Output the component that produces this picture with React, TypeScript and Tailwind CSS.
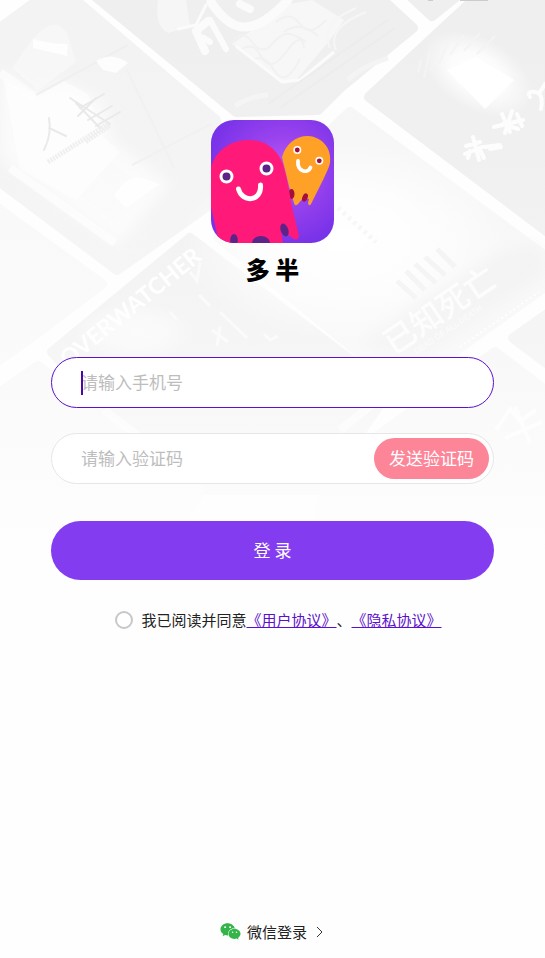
import { useState } from "react";
import { FaWeixin } from "react-icons/fa";

function Backdrop() {
  return (
    <svg
      aria-hidden="true"
      viewBox="0 0 545 580"
      preserveAspectRatio="xMidYMin slice"
      className="absolute inset-x-0 top-0 w-full"
    >
      <defs>
        <linearGradient id="fade" x1="0" y1="0" x2="0" y2="1">
          <stop offset="0" stopColor="#fefefe" stopOpacity="0" />
          <stop offset="0.3" stopColor="#fefefe" stopOpacity="0.1" />
          <stop offset="0.6" stopColor="#fefefe" stopOpacity="0.4" />
          <stop offset="0.95" stopColor="#fefefe" stopOpacity="1" />
        </linearGradient>
        <filter id="soft" x="-30%" y="-30%" width="160%" height="160%">
          <feGaussianBlur stdDeviation="7" />
        </filter>
        <radialGradient id="glow">
          <stop offset="0" stopColor="#fff" />
          <stop offset="0.5" stopColor="#fff" stopOpacity="0.8" />
          <stop offset="1" stopColor="#fff" stopOpacity="0" />
        </radialGradient>
      </defs>

      <g strokeWidth="10" strokeLinejoin="round">
        <path d="M-8 34 38 0V-8H66L216 120 208 206 117 270 -8 176Z" fill="#f3f3f3" stroke="#f3f3f3" />
        <path d="M90-8H374L413 28 340 88 318 110 236 112Z" fill="#efefef" stroke="#efefef" />
        <path d="M406-8H462L432 16Z" fill="#efefef" stroke="#efefef" />
        <path d="M482-8H553V236L369 97Z" fill="#efefef" stroke="#efefef" />
        <path d="M350 112 553 262V281L440 362H370L218 237Z" fill="#f6f6f6" stroke="#f6f6f6" />
        <path d="M190 238 390 390 320 490 180 490 52 352Z" fill="#f0f0f0" stroke="#f0f0f0" />
        <path d="M-8 204 102 284 32 337-8 365Z" fill="#f8f8f8" stroke="#f8f8f8" />
        <path d="M553 310 513 338 553 368Z" fill="#f0f0f0" stroke="#f0f0f0" />
        <path d="M495 352 553 396V600H300L330 470Z" fill="#f4f4f4" stroke="#f4f4f4" />
        <path d="M-8 398 38 366 200 490 140 600H-8Z" fill="#f6f6f6" stroke="#f6f6f6" />
      </g>

      {/* left poster */}
      <path d="M0 68 36 94 64 81 104 101 112 140 170 185 118 246 0 158Z" fill="#fff" opacity=".65" filter="url(#soft)" />
      <path d="M4 82 36 94 64 81 88 94 104 138 120 152 76 200 20 170Z" fill="#fff" opacity=".55" />
      <path d="M0 73 36 98" stroke="#fff" strokeWidth="9" opacity=".6" />
      <path d="M36 95 128 45" stroke="#efefef" strokeWidth="2" />
      <path d="M33 39Q50 44 68 44L67 56 33 48Z" fill="#fff" opacity=".8" />
      <path d="M96 61Q112 51 128 63L116 73 103 70Z" fill="#fff" opacity=".8" />
      <path d="M26 48Q55 8 68 36L76 62 38 90 12 68Z" fill="#fff" opacity=".35" />
      <path d="M114 196Q126 174 142 178L160 184 126 208Z" fill="#fff" opacity=".8" />
      <path d="M10 168 115 243" stroke="#fff" strokeWidth="8" opacity=".7" />
      <path d="M126 68 174 168M211 124 132 165" stroke="#f0f0f0" strokeWidth="2" fill="none" />
      <g fill="none" stroke="#e8e8e8" strokeWidth="2" strokeLinecap="round">
        <path d="M49 118Q52 134 44 150M49 128 66 136" />
        <path d="M70 98 110 124M78 116 96 98M80 108 104 94M88 120 112 106M96 126 120 112M76 103 100 128" />
        <path d="M48 162 108 124" strokeWidth="5" strokeDasharray="2 1" strokeLinecap="butt" stroke="#eeeeee" />
        <path d="M86 142 110 126" strokeWidth="4" strokeDasharray="2 1" strokeLinecap="butt" stroke="#eeeeee" />
      </g>

      {/* top poster */}
      <path d="M158 0Q154 26 168 33L190 26 186 0Z" fill="#f6f6f6" />
      <path d="M232 44 290 4 312 0 344 20 330 40 296 80 282 82Z" fill="#f7f7f7" />
      <path d="M232 43Q242 28 252 42T272 44 290 34 306 42M236 54Q252 38 261 56T286 52 304 48M250 62Q263 51 274 70T300 59M276 22Q290 10 300 24T326 20M284 32Q300 20 318 36" fill="none" stroke="#f1f1f1" strokeWidth="2" />
      <path d="M330 48Q318 24 356 8M336 50Q326 28 366 12" fill="none" stroke="#f6f6f6" strokeWidth="2" />
      <path d="M236 46 282 82 300 80 334 52" fill="none" stroke="#fbfbfb" strokeWidth="3" />
      <g fill="none" stroke="#fbfbfb" strokeLinecap="round" strokeLinejoin="round">
        <path d="M178 29 196 25 206 5" strokeWidth="3" />
        <path d="M208 21 196 31 205 51" strokeWidth="8" />
        <path d="M210 20 226 49M204 38 210 42" strokeWidth="6" />
        <path d="M211 2Q228 28 246 27T288 0" strokeWidth="9" />
        <path d="M240 4 250 9" strokeWidth="8" />
      </g>
      <path d="M268 104 388 20M280 108 395 28" stroke="#ececec" strokeWidth="2" />
      <path d="M235 106Q250 96 268 95M348 80Q359 68 388 58" stroke="#f4f4f4" strokeWidth="5" fill="none" />

      {/* right poster */}
      <ellipse cx="478" cy="74" rx="60" ry="36" transform="rotate(30 478 74)" fill="url(#glow)" />
      <path d="M447 70 476 57 514 80 485 109Z" fill="#fff" />
      <path d="M421 60 418 72M430 50 424 78M440 42 431 70M450 38 439 64M464 35 450 55M480 33 464 51M495 36 477 54" stroke="#f4f4f4" strokeWidth="2" />
      <g fill="none" stroke="#fdfdfd" strokeWidth="4" strokeLinecap="round">
        <path d="M466 146 480 142M473 137 479 160M465 154 482 147M470 151 468 158M480 150 484 158M484 147 500 145M490 149 501 147" />
        <path d="M494 127 523 120M502 114 510 132M512 111 505 133M517 114 522 126M503 124 518 129" />
        <path d="M530 97Q526 91 535 92T541 109M545 84 540 92" />
      </g>
      <path d="M460 0H488M428 0H433" stroke="#ccc" strokeWidth="2" />

      {/* centre poster */}
      <ellipse cx="345" cy="240" rx="165" ry="100" fill="url(#glow)" />
      <path d="M338 208 376 242" stroke="#f5f5f5" strokeWidth="5" strokeDasharray="3 4" />
      <path d="M360 345 405 312 500 254 535 244 545 262V275L425 358H385Z" fill="#f0f0f0" filter="url(#soft)" />
      <path d="M397 281 416 298M406 271 425 290M415 264 436 283M425 257 445 275M437 249 455 267" stroke="#f1f1f1" strokeWidth="5" />
      <g fill="#fff" fontFamily="'Noto Sans CJK SC', sans-serif" fontWeight="500" transform="rotate(-34 396 356)">
        <text x="394" y="354" fontSize="32" opacity=".85">已知死亡</text>
        <text x="414" y="366" fontSize="8" fontFamily="'Liberation Sans', sans-serif" opacity=".7">DEAD  OF  ALL  DEATH</text>
      </g>
      <path d="M460 347 539 292" stroke="#fff" strokeWidth="2" strokeDasharray="2 3" />

      {/* lower left poster */}
      <ellipse cx="135" cy="332" rx="60" ry="30" fill="url(#glow)" opacity=".6" />
      <text x="68" y="368" fontSize="23" fontWeight="700" fill="#fff" fontFamily="Lato, sans-serif" transform="rotate(-39 68 368)">OVERWATCHER</text>
      <path d="M190 272 197 281 200 262M199 295 210 306M220 312 247 338M170 312 177 320" fill="none" stroke="#f9f9f9" strokeWidth="3" />
      <path d="M212 330 228 342M220 326 217 346M264 334 270 340 278 336" fill="none" stroke="#f9f9f9" strokeWidth="3" />
      <path d="M104 410 150 445M340 430 407 377" stroke="#fff" strokeWidth="8" opacity=".6" />
      <path d="M496 430 510 409 520 421 536 410M505 438 542 422M515 407 530 443" fill="none" stroke="#fff" strokeWidth="4" opacity=".8" />
      <rect width="545" height="580" fill="url(#fade)" />
    </svg>
  );
}

function Logo() {
  return (
    <svg role="img" aria-label="多半" viewBox="0 0 123 123" className="size-[123px]">
      <defs>
        <radialGradient id="violet" cx=".58" cy=".42" r=".62">
          <stop offset="0" stopColor="#bd5cf5" />
          <stop offset=".45" stopColor="#9a43ee" />
          <stop offset="1" stopColor="#7832e8" />
        </radialGradient>
        <clipPath id="tile">
          <rect width="123" height="123" rx="23" />
        </clipPath>
      </defs>
      <g clipPath="url(#tile)">
        <rect width="123" height="123" fill="url(#violet)" />
        <path d="M71 37C75 24 84 16 97 16C112 17 121 29 119 43C118 48 115 53 113 58L100 84Q98 87 97 83L98 79 92 78 87 84Q84 87 83 83L78 66Z" fill="#ffa127" />
        <ellipse cx="94" cy="77.500" rx="2.600" ry="4.300" transform="rotate(22 94 77.5)" fill="#a40e3d" />
        <ellipse cx="80.500" cy="74" rx="3" ry="5" fill="#a40e3d" />
        <path d="M0 47C5 30 20 20 38 20C56 20 67 31 72 44C76 57 78 70 81 87L88 116Q87 121 83 119L70 110 72 123H8L0 87Z" fill="#ff1979" />
        <g fill="#5c2489">
          <ellipse cx="23" cy="120" rx="3.800" ry="6" />
          <ellipse cx="50" cy="123" rx="9" ry="7" />
          <ellipse cx="73.500" cy="110" rx="3.800" ry="6.700" transform="rotate(-20 73.5 110)" />
        </g>
        <g fill="#5c2489" stroke="#fff" strokeWidth="3">
          <circle cx="15.500" cy="56.500" r="5.500" />
          <circle cx="55.500" cy="48.500" r="5.500" />
        </g>
        <g fill="#a40e3d" stroke="#fff" strokeWidth="1.600">
          <circle cx="86.300" cy="30" r="3.200" />
          <circle cx="108.300" cy="40.800" r="3.200" />
        </g>
        <g fill="none" stroke="#fff" strokeLinecap="round">
          <path d="M27.500 69C31 83 51 82 49.500 65" strokeWidth="5" />
          <path d="M87 41C86 52 97 54 99.500 47.500" strokeWidth="3.800" />
        </g>
      </g>
    </svg>
  );
}

const field =
  "flex h-[51px] items-center rounded-full border bg-white pl-[29px]";
const input =
  "h-full w-full min-w-0 flex-1 bg-transparent pb-0.5 text-[17px] text-[#222] outline-none placeholder:text-[#bdbdbd]";

export default function App() {
  const [phone, setPhone] = useState("");
  const [code, setCode] = useState("");
  const [agreed, setAgreed] = useState(false);

  return (
    <div className="relative flex min-h-screen flex-col bg-[#fefefe] font-['Noto_Sans_CJK_SC',sans-serif] text-[#222]">
      <Backdrop />
      <main className="relative flex flex-1 flex-col px-[51px] pt-[120px] pb-4">
        <header className="flex flex-col items-center">
          <Logo />
          <h1 className="mt-2.5 text-2xl leading-8 font-black text-black">多 半</h1>
        </header>

        <form className="mt-[72px] flex flex-col" onSubmit={(e) => e.preventDefault()}>
          <div className={`${field} relative border-[#5b10cc]`}>
            <input
              type="tel"
              aria-label="手机号"
              placeholder="请输入手机号"
              value={phone}
              onChange={(e) => setPhone(e.target.value)}
              className={`${input} caret-[#4b08a8]`}
            />
            {phone === "" && (
              <span aria-hidden="true" className="absolute left-[29px] h-6 w-0.5 bg-[#4b08a8]" />
            )}
          </div>

          <div className={`${field} mt-[25px] border-[#e6e6e6] pr-1`}>
            <input
              type="text"
              inputMode="numeric"
              aria-label="验证码"
              placeholder="请输入验证码"
              value={code}
              onChange={(e) => setCode(e.target.value)}
              className={input}
            />
            <button type="button" className="h-[41px] shrink-0 rounded-full bg-[#fd8598] px-[15px] pb-0.5 text-[17px] text-white">
              发送验证码
            </button>
          </div>

          <button type="submit" className="mt-[37px] h-[59px] rounded-full bg-[#833cf0] pb-0.5 text-[17px] text-white">
            登 录
          </button>

          <div className="mt-7 flex items-center justify-center gap-2 pl-3 text-[15px] leading-6">
            <input
              id="agree"
              type="checkbox"
              checked={agreed}
              onChange={(e) => setAgreed(e.target.checked)}
              className="size-[18px] shrink-0 appearance-none rounded-full border-2 border-[#c8c8c8] bg-white checked:border-[#833cf0] checked:bg-[#833cf0]"
            />
            <p className="whitespace-nowrap [text-spacing-trim:space-all]">
              <label htmlFor="agree">我已阅读并同意</label>
              <a href="#terms" className="text-[#5b10cc] underline">《用户协议》</a>、
              <a href="#privacy" className="text-[#5b10cc] underline">《隐私协议》</a>
            </p>
          </div>
        </form>

        <button type="button" className="mt-auto flex items-center gap-1.5 self-center text-[15px] leading-5">
          <FaWeixin className="size-[21px] text-[#35b44a]" />
          微信登录
          <svg aria-hidden="true" viewBox="0 0 12 12" className="size-3 fill-none stroke-[#333]">
            <path d="M4 1 9 6 4 11" />
          </svg>
        </button>
      </main>
    </div>
  );
}
